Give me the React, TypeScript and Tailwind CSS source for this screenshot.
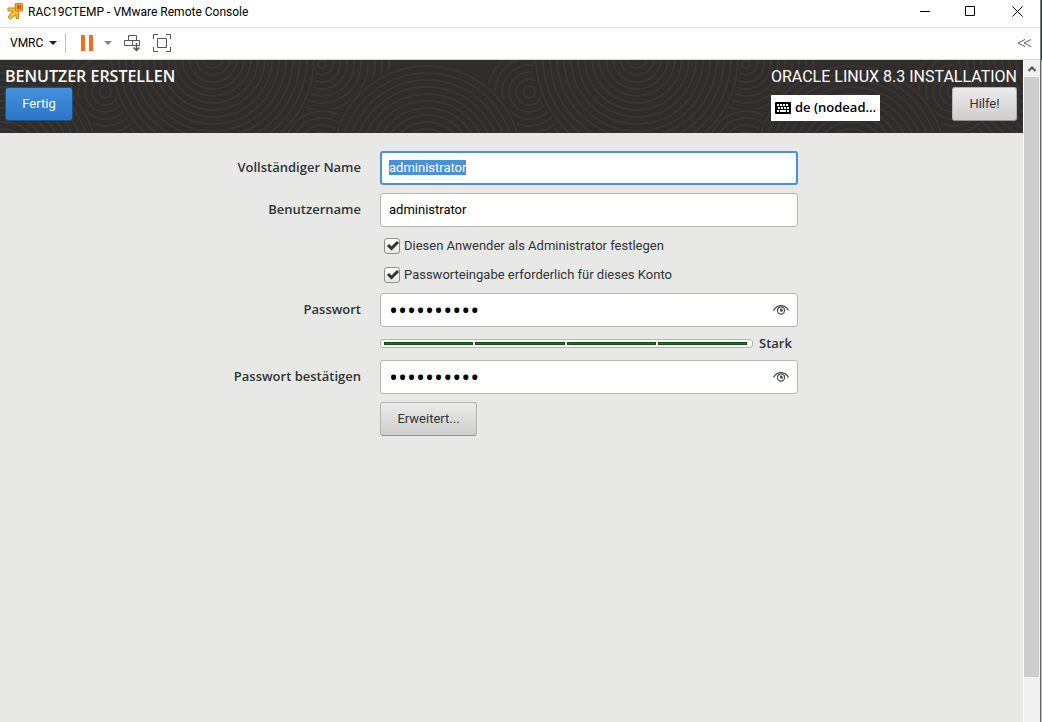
import { useEffect, useRef, useState } from 'react';
import type { ReactNode } from 'react';

// the swirl texture repeats every 424px
const swirlTile = [
  { cx: 322, cy: 4, r: 70 },
  { cx: 110, cy: 90, r: 40 },
  { cx: 105, cy: 32, r: 44 },
  { cx: 322, cy: 88, r: 40 },
  { cx: 213, cy: -2, r: 104 },
  { cx: 3, cy: 100, r: 97 },
];
const rings = [0, 424, 848].flatMap(x => swirlTile.map(c => ({ ...c, cx: c.cx + x })));

function Swirls() {
  return (
    <svg className="absolute inset-0 h-full w-full" aria-hidden="true">
      {rings.map((c, i) => (
        <g key={i} stroke="#393532" strokeWidth="2" fill="none">
          <circle cx={c.cx} cy={c.cy} r={c.r} fill="#312d2a" stroke="none" />
          {Array.from({ length: Math.floor(c.r / 7) }, (_, n) => (
            <circle key={n} cx={c.cx} cy={c.cy} r={c.r - 3 - n * 7} />
          ))}
        </g>
      ))}
    </svg>
  );
}

function TitleBar() {
  return (
    <div className="flex h-7 items-center border-b border-[#e2e2e2] pl-[7px] pb-1">
      <svg width="17" height="17" viewBox="0 0 17 17" className="mr-1 shrink-0" aria-hidden="true">
        <path d="M1 5h6l2.500-1 3 3-1 2.500V15.500H9V11.500L3.500 16 1 14l5-6H1z" fill="#fbc02d" stroke="#c98211" />
        <path d="M8.500.5h7v7.500h-7z" fill="#f9a825" stroke="#c98211" />
        <rect x="10" y="2" width="4" height="4" fill="#e8552b" />
      </svg>
      <h1 className="flex-1 text-xs">RAC19CTEMP - VMware Remote Console</h1>
      <div className="flex">
        <button aria-label="Minimieren" className="flex w-11 justify-center">
          <svg width="11" height="11" stroke="#000" fill="none"><path d="M0 5.500h10" /></svg>
        </button>
        <button aria-label="Maximieren" className="flex w-[47px] justify-center">
          <svg width="11" height="11" stroke="#000" fill="none"><path d="M.5.5h9v9h-9z" /></svg>
        </button>
        <button aria-label="Schließen" className="flex w-[46px] justify-center">
          <svg width="11" height="11" stroke="#000" fill="none"><path d="M.5.5l10 10M10.500.5l-10 10" /></svg>
        </button>
      </div>
    </div>
  );
}

function Toolbar() {
  return (
    <div className="flex h-8 items-center border-b border-[#d9d9d9] pb-0.5 pl-2.5 pr-2">
      <button className="flex items-center gap-1.5 text-xs">
        VMRC
        <svg width="8" height="4" fill="#222"><path d="M0 0h8L4 4z" /></svg>
      </button>
      <span className="ml-2 h-5 w-px bg-[#bdbdbd]" />
      <button aria-label="Pause" className="ml-3.5">
        <svg width="14" height="16" fill="#ff6a1c"><path d="M1 0h4v16H1zM9 0h4v16H9z" /></svg>
      </button>
      <button aria-label="Energieoptionen" className="ml-2.5">
        <svg width="8" height="4" fill="#858585"><path d="M0 0h8L4 4z" /></svg>
      </button>
      <button aria-label="Strg+Alt+Entf senden" className="ml-3">
        <svg width="17" height="18" stroke="#555" fill="none">
          <path d="M4.500 1.500h8v5h-8zM.5 6.500h8v5h-8zM8.500 6.500h7v5h-7z" />
          <path d="M12.500 9v7M9.500 13.500l3 3 3-3" strokeWidth="1.500" />
        </svg>
      </button>
      <button aria-label="Vollbild" className="ml-3">
        <svg width="19" height="18" stroke="#555" fill="none">
          <path d="M4.500 4.500h9v9h-9zM.5 5V.5H5M13 .5h4.500V5M17.500 13v4.500H13M5 17.500H.5V13" />
        </svg>
      </button>
      <button aria-label="Leiste einklappen" className="ml-auto">
        <svg width="16" height="8" stroke="#516170" fill="none"><path d="M9 .5L2 4l7 3.500M15 .5L8 4l7 3.500" /></svg>
      </button>
    </div>
  );
}

const greyButton =
  'rounded-[3px] border border-[#b3b3af] border-b-[#92928e] bg-linear-to-b from-[#ebebea] to-[#cececc] text-[13px] text-[#2e3436]';

function SpokeHeader() {
  return (
    <header className="relative overflow-hidden bg-[#312d2a] text-white">
      <Swirls />
      <div className="relative flex justify-between px-[5px] pr-1.5 pt-1.5 pb-3">
        <div className="flex flex-col items-start">
          <h2 className='font-["Open_Sans",sans-serif] text-base leading-[21px] font-semibold'>BENUTZER ERSTELLEN</h2>
          <button className="h-[34px] w-[68px] rounded-[3px] border border-[#1c5187] bg-linear-to-b from-[#4690dc] to-[#2a76c6] text-[13px]">
            Fertig
          </button>
        </div>
        <div className="flex flex-col">
          <div className="text-base leading-[21px]">ORACLE LINUX 8.3 INSTALLATION</div>
          <div className="flex items-start justify-between">
            <button className='mt-2 flex h-[26px] items-center gap-1 bg-white px-1 font-["Open_Sans",sans-serif] text-[13px] font-semibold text-black'>
              <svg width="16" height="12" aria-hidden="true">
                <rect width="16" height="12" rx="1" fill="#000" />
                <path d="M2 3h12M3 6h11" stroke="#fff" strokeWidth="2" strokeDasharray="2 1" />
                <path d="M2 9h2M5 9h6M12 9h2" stroke="#fff" strokeWidth="2" />
              </svg>
              de (nodead…
            </button>
            <button className={`h-[34px] w-[65px] ${greyButton}`}>Hilfe!</button>
          </div>
        </div>
      </div>
    </header>
  );
}

const field =
  'h-[34px] w-full rounded-[3px] border border-[#b6b6b3] bg-white px-2 pb-0.5 text-black outline-none focus:border-2 focus:border-[#4a90d9] focus:px-[7px] selection:bg-[#4a90d9] selection:text-white';

function Row({ label, id, children }: { label?: string; id?: string; children: ReactNode }) {
  return (
    <div className="flex items-center gap-[19px]">
      <div className='w-[361px] shrink-0 text-right font-["Open_Sans",sans-serif] text-[13px] font-semibold'>
        {label && <label htmlFor={id}>{label}</label>}
      </div>
      <div className="w-[418px]">{children}</div>
    </div>
  );
}

function PasswordField({ id }: { id: string }) {
  const [value, setValue] = useState('Installer1');
  const [visible, setVisible] = useState(false);

  return (
    <div className="relative">
      <input
        id={id}
        type={visible ? 'text' : 'password'}
        value={value}
        onChange={e => setValue(e.target.value)}
        className={`${field} ${visible ? 'text-[13px]' : 'font-["Open_Sans",sans-serif] text-2xl'}`}
      />
      <button
        type="button"
        aria-label="Passwort anzeigen"
        onClick={() => setVisible(v => !v)}
        className="absolute top-3 right-2"
      >
        <svg width="17" height="10" stroke="#4b5052" fill="none">
          <path d="M.5 5.500C4-1 12-1 15.500 5.500" strokeWidth="1.300" />
          <circle cx="8" cy="5.500" r="3.600" strokeWidth="1.200" />
          <path d="M8 3.500v2h2" strokeWidth="1.800" />
        </svg>
      </button>
    </div>
  );
}

function Check({ label }: { label: string }) {
  const [on, setOn] = useState(true);

  return (
    <label className="flex h-[21px] items-center gap-1 pl-1 text-[13px]">
      <span className="relative flex">
        <input
          type="checkbox"
          checked={on}
          onChange={e => setOn(e.target.checked)}
          className="size-4 appearance-none rounded-[3px] border border-[#8f8f8c] bg-linear-to-b from-white to-[#e4e4e2]"
        />
        {on && (
          <svg className="pointer-events-none absolute inset-0" width="16" height="16" fill="none" stroke="#2e3436" strokeWidth="3">
            <path d="M4 7l3.500 3.500L14 4" />
          </svg>
        )}
      </span>
      {label}
    </label>
  );
}

function UserForm() {
  const [fullName, setFullName] = useState('administrator');
  const [userName, setUserName] = useState('administrator');
  const first = useRef<HTMLInputElement>(null);

  useEffect(() => {
    first.current?.focus();
    first.current?.select();
  }, []);

  return (
    <form className="flex flex-col gap-2 pt-[18px]" onSubmit={e => e.preventDefault()}>
      <Row label="Vollständiger Name" id="fullname">
        <input id="fullname" ref={first} value={fullName} onChange={e => setFullName(e.target.value)} className={`${field} text-[13px]`} />
      </Row>
      <Row label="Benutzername" id="username">
        <input id="username" value={userName} onChange={e => setUserName(e.target.value)} className={`${field} text-[13px]`} />
      </Row>
      <Row><Check label="Diesen Anwender als Administrator festlegen" /></Row>
      <Row><Check label="Passworteingabe erforderlich für dieses Konto" /></Row>
      <Row label="Passwort" id="password"><PasswordField id="password" /></Row>
      <Row>
        <div className='flex h-[17px] items-center gap-1.5 font-["Open_Sans",sans-serif] text-[13px] font-semibold'>
          <div className="flex h-[9px] w-[373px] items-center gap-0.5 rounded-[3px] border border-[#b6b6b3] bg-white pr-[5px] pl-[3px]">
            {[1, 2, 3, 4].map(n => (
              <span key={n} className="h-[3px] flex-1 border border-[#0d4f0d] bg-[#008a00]" />
            ))}
          </div>
          Stark
        </div>
      </Row>
      <Row label="Passwort bestätigen" id="confirm"><PasswordField id="confirm" /></Row>
      <Row>
        <button type="button" className={`h-[34px] w-[97px] ${greyButton}`}>Erweitert...</button>
      </Row>
    </form>
  );
}

function Scrollbar() {
  return (
    <div className="flex w-[17px] shrink-0 flex-col border-l border-white bg-[#f0f0f0]">
      <button aria-label="Nach oben" className="flex h-[17px] items-center justify-center">
        <svg width="8" height="6" fill="none" stroke="#555" strokeWidth="2"><path d="M.5 5L4 1.500 7.500 5" /></svg>
      </button>
      <div className="h-[600px] w-[15px] bg-[#cdcdcd]" />
    </div>
  );
}

export default function App() {
  return (
    <div className='flex min-h-screen bg-white font-["Roboto",sans-serif] text-black'>
      <div className="flex min-w-0 flex-1 flex-col">
        <TitleBar />
        <Toolbar />
        <div className="flex flex-1">
          <main className="min-w-0 flex-1 bg-[#e8e8e6] text-[#2e3436]">
            <SpokeHeader />
            <UserForm />
          </main>
          <Scrollbar />
        </div>
      </div>
      <div className="flex w-0.5 flex-col">
        <div className="h-[60px] border-l border-[#777] bg-[#1f3d7a]" />
        <div className="flex-1 border-l border-[#666] bg-[#bbb]" />
      </div>
    </div>
  );
}
